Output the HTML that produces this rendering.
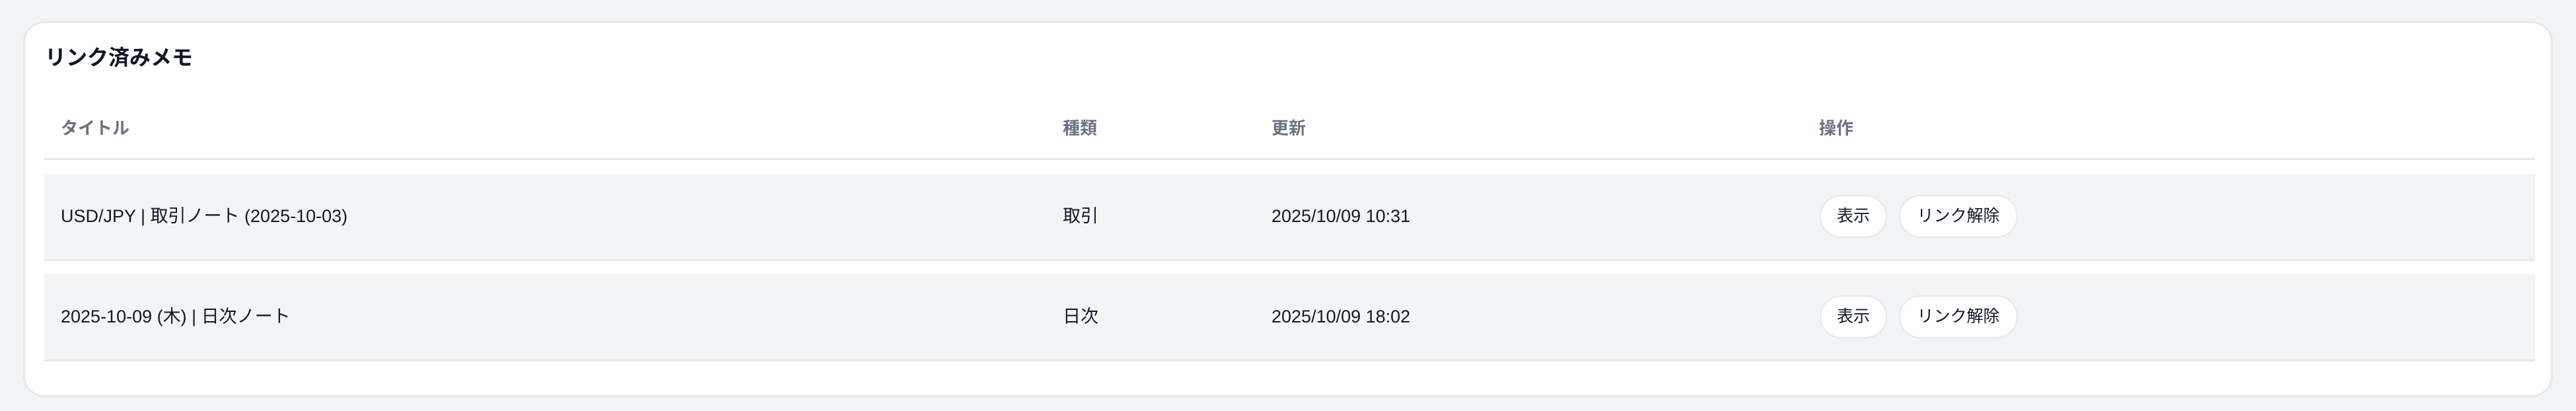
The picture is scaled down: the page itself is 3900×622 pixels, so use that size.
<!DOCTYPE html>
<html><head><meta charset="utf-8"><style>
*{box-sizing:border-box;margin:0;padding:0}
body{width:3900px;height:622px;background:#f3f4f6;font-family:"Liberation Sans","Noto Sans CJK JP",sans-serif;color:#111827;position:relative;overflow:hidden}
.card{position:absolute;left:35px;top:32px;width:3830px;height:569px;background:#fff;border:3px solid #e5e7eb;border-radius:32px}
.t{position:absolute;left:68px;top:68px;font-size:32px;font-weight:bold;line-height:38px}
.th{position:absolute;top:177px;font-size:26px;font-weight:bold;color:#6b7280;line-height:34px}
.hl{position:absolute;left:67px;width:3771px;top:239px;height:3px;background:#e5e7eb}
.row{position:absolute;left:67px;width:3771px;height:132px;background:#f3f4f6;border-bottom:3px solid #e5e7eb}
.c{position:absolute;top:0;line-height:129px;font-size:27px}
.b{position:absolute;top:32px;height:65px;border:2px solid #e5e7eb;border-radius:33px;background:#fff;font-size:25px;line-height:61px;text-align:center}
</style></head><body>
<div class="card"></div>
<div class="t">リンク済みメモ</div>
<div class="th" style="left:92px">タイトル</div>
<div class="th" style="left:1609px">種類</div>
<div class="th" style="left:1925px">更新</div>
<div class="th" style="left:2754px">操作</div>
<div class="hl"></div>
<div class="row" style="top:263px">
<div class="c" style="left:25px">USD/JPY | 取引ノート (2025-10-03)</div>
<div class="c" style="left:1542px">取引</div>
<div class="c" style="left:1858px">2025/10/09 10:31</div>
<div class="b" style="left:2688px;width:102px">表示</div>
<div class="b" style="left:2808px;width:180px">リンク解除</div>
</div>
<div class="row" style="top:415px">
<div class="c" style="left:25px">2025-10-09 (木) | 日次ノート</div>
<div class="c" style="left:1542px">日次</div>
<div class="c" style="left:1858px">2025/10/09 18:02</div>
<div class="b" style="left:2688px;width:102px">表示</div>
<div class="b" style="left:2808px;width:180px">リンク解除</div>
</div>
</body></html>
